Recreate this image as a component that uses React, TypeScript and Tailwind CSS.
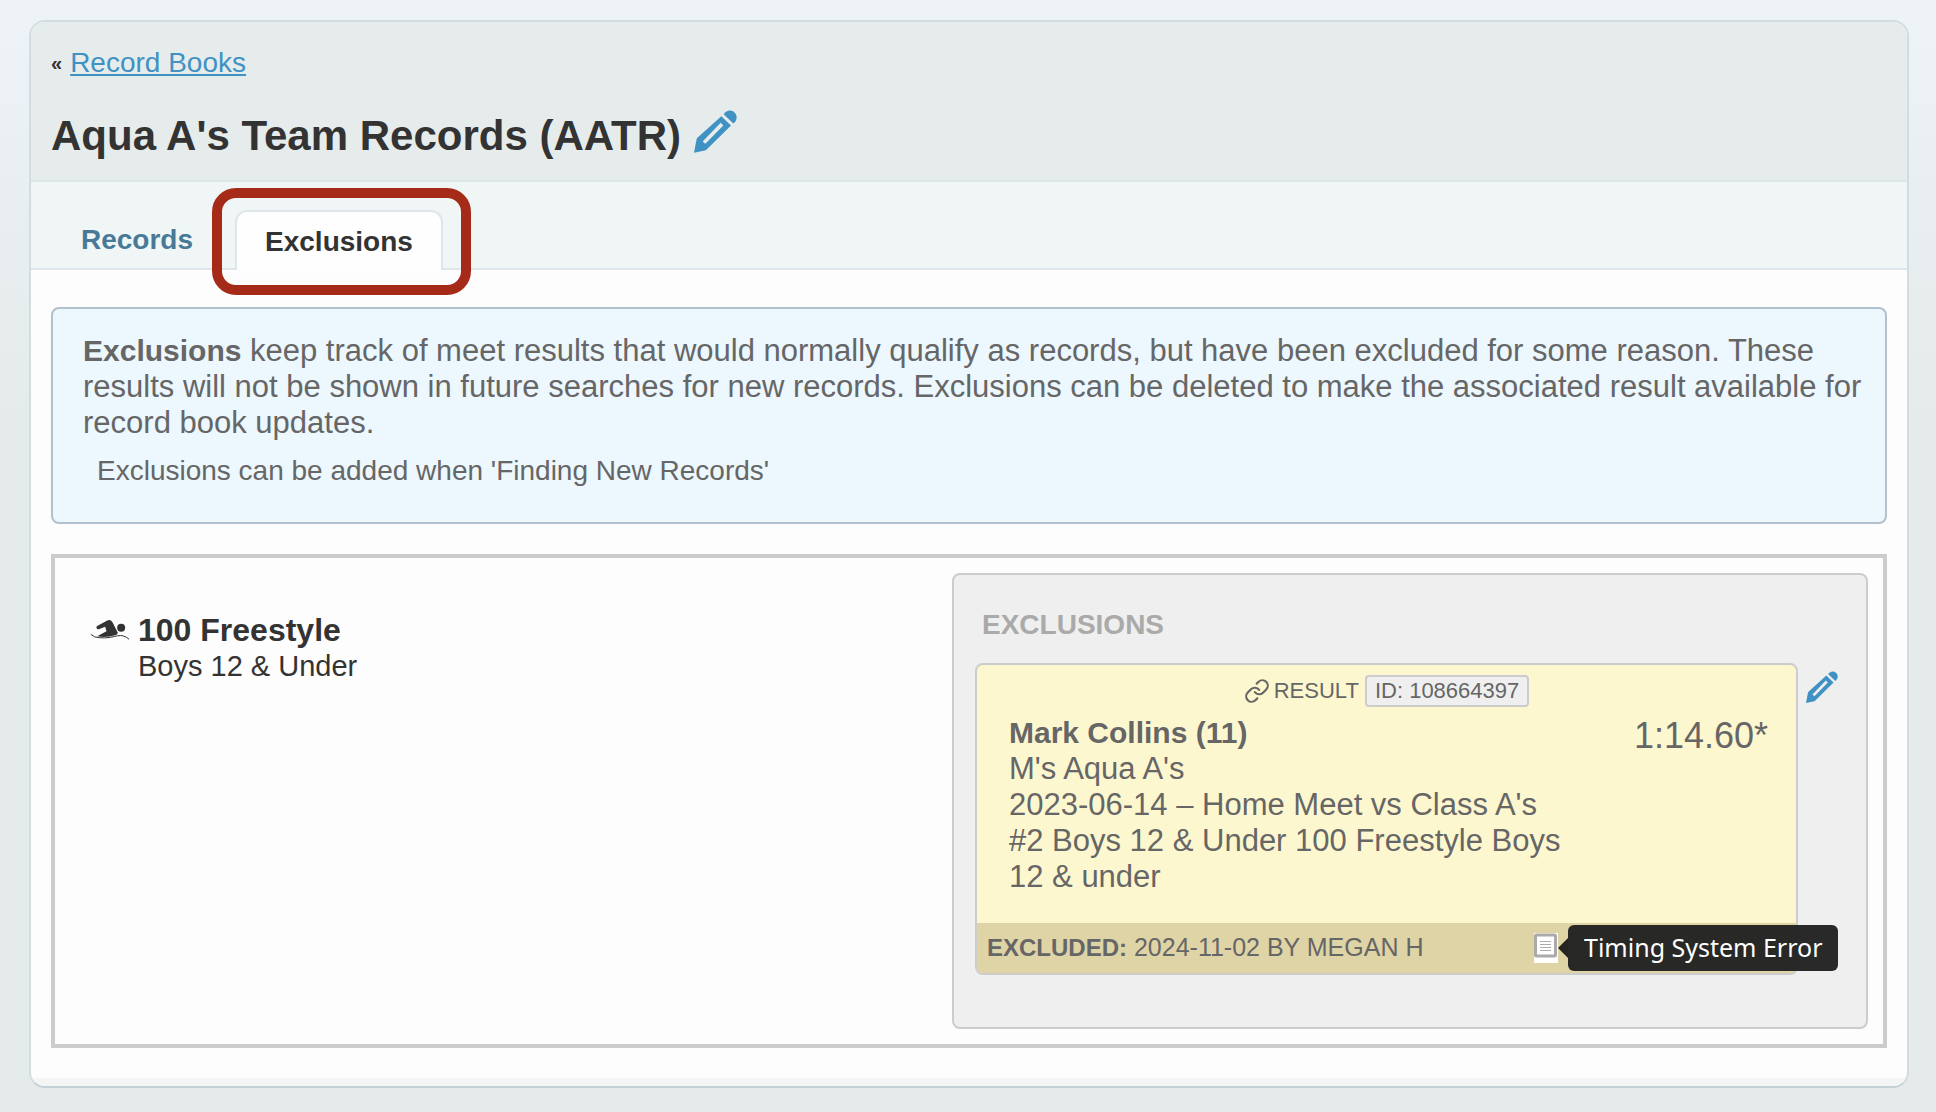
import { Link } from 'lucide-react';

interface Exclusion {
  resultId: string;
  swimmer: string;
  team: string;
  meet: string;
  event: string;
  time: string;
  excludedOn: string;
  note: string;
}

const exclusion: Exclusion = {
  resultId: '108664397',
  swimmer: 'Mark Collins (11)',
  team: "M's Aqua A's",
  meet: "2023-06-14 – Home Meet vs Class A's",
  event: '#2 Boys 12 & Under 100 Freestyle Boys 12 & under',
  time: '1:14.60*',
  excludedOn: '2024-11-02 BY MEGAN H',
  note: 'Timing System Error',
};

function PencilIcon({ className }: { className: string }) {
  return (
    <svg viewBox="0 0 129 128" fill="currentColor" className={className} aria-hidden="true">
      <path
        fillRule="evenodd"
        d="M0 128 8 86Q9 84 11 82L82 18 111 46 38 118Q36 120 33 121ZM26 94 34 101 88 46 80 38Z"
      />
      <path d="M89 12C98-1 114-2 122 8C131 17 130 31 118 40Z" />
    </svg>
  );
}

function SwimmerIcon() {
  return (
    <svg viewBox="0 0 117 60" className="h-5 w-10 shrink-0 text-[#333]" aria-hidden="true">
      <circle cx="92" cy="23" r="12" fill="currentColor" />
      <path
        fill="currentColor"
        d="M20 18 49 2Q60-3 66 7L82 38Q81 43 76 45Q48 54 20 49L48 34 44 20 27 27Q20 29 18 24Q17 20 20 18Z"
      />
      <path
        d="M1 43Q12 53 25 53Q42 55 60 52C76 49 88 44 99 48Q109 51 116 58"
        fill="none"
        stroke="currentColor"
        strokeWidth="3"
      />
    </svg>
  );
}

function NoteIcon() {
  return (
    <svg viewBox="0 0 24 30" className="h-[30px] w-6" aria-hidden="true">
      <path fill="#fff" d="M0 0H24V30H0Z" />
      <rect x="1.5" y="2" width="20" height="21" rx="1" fill="none" stroke="#aaa" strokeWidth="3" />
      <path stroke="#aaa" d="M6 8.5H17M6 11.5H17M6 14.5H17M6 17.5H17" />
    </svg>
  );
}

function ExclusionCard({ item }: { item: Exclusion }) {
  return (
    <article className="grow rounded-lg border-2 border-[#ccc] bg-[#fdf7cf] text-[#666]">
      <div className="flex h-[46px] items-center justify-center pt-1.5 text-[22px] leading-7">
        <Link className="size-[26px]" aria-hidden="true" />
        <span className="ml-1">RESULT</span>
        <span className="ml-1.5 rounded-sm border-2 border-[#ccc] bg-[#efefef] px-2">
          ID: {item.resultId}
        </span>
      </div>
      <div className="flex items-start justify-between pr-7 pb-7 pl-8 leading-9">
        <div className="mt-1 w-[560px] text-[31px]">
          <h3 className="text-[30px] leading-9 font-bold">{item.swimmer}</h3>
          <p className="leading-9">{item.team}</p>
          <p className="leading-9">{item.meet}</p>
          <p className="leading-9">{item.event}</p>
        </div>
        <p className="text-4xl leading-[50px]">{item.time}</p>
      </div>
      <footer className="flex h-[50px] items-center rounded-b-md bg-[#dfd4a6] pl-2.5">
        <p className="grow text-[25px]">
          <strong className="text-2xl">EXCLUDED:</strong> {item.excludedOn}
        </p>
        <div className="relative mr-[238px]">
          <button type="button" aria-label="Exclusion note" className="block">
            <NoteIcon />
          </button>
          <div
            role="tooltip"
            className="absolute top-1/2 left-full ml-2.5 flex h-[46px] -translate-y-1/2 items-center rounded-md bg-[#222]/97 px-4 font-['Noto_Sans',sans-serif] text-[25px] whitespace-nowrap text-white"
          >
            <svg viewBox="0 0 10 20" className="absolute right-full h-5 w-2.5" aria-hidden="true">
              <path fill="#252422" d="M10 0V20L0 10Z" />
            </svg>
            {item.note}
          </div>
        </div>
      </footer>
    </article>
  );
}

export default function App() {
  return (
    <div className="min-h-screen bg-[#e5ebea] bg-[linear-gradient(#edf3f6,#ebf1f4_100px,#e5ebea_420px)] pt-5 pr-[27px] pb-6 pl-[29px] font-['Liberation_Sans',Arial,sans-serif] text-[#333]">
      <main className="overflow-hidden rounded-2xl border-2 border-[#d2dce1] border-b-[#c3d0d6] bg-[#fdfdfd]">
        <header className="h-40 border-b-2 border-[#dfe6eb] bg-[#e6eceb] px-5 pt-[23px]">
          <nav className="flex h-9 items-center gap-2 text-[28px]">
            <span className="text-xl font-bold">«</span>
            <a href="#record-books" className="text-[#3f92c3] underline">
              Record Books
            </a>
          </nav>
          <div className="mt-[26px] flex h-14 items-center gap-[13px]">
            <h1 className="text-[42px] font-bold">Aqua A's Team Records (AATR)</h1>
            <button type="button" aria-label="Edit record book" className="mb-2 text-[#3f92c3]">
              <PencilIcon className="size-[43px]" />
            </button>
          </div>
        </header>

        <nav className="flex h-[88px] items-end border-b-2 border-[#dfe6eb] bg-[#f0f6f6] pl-[50px] text-[28px] font-bold">
          <a href="#records" className="mb-[7px] text-[#487a98]">
            Records
          </a>
          <div className="relative -mb-0.5 ml-[42px]">
            <a
              href="#exclusions"
              aria-current="page"
              className="flex h-[60px] items-center rounded-t-xl border-2 border-b-0 border-[#dfe6eb] bg-[#fefefe] px-7 pt-0.5"
            >
              Exclusions
            </a>
            <span className="pointer-events-none absolute -top-[22px] -right-7 -bottom-[25px] -left-[23px] rounded-3xl border-10 border-[#a52a17]" />
          </div>
        </nav>

        <div className="px-5 pt-[37px] pb-[30px]">
          <section className="rounded-lg border-2 border-[#b1c1ce] bg-[#ecf7fe] pt-6 pr-5 pb-[31px] pl-[30px] text-[#666]">
            <p className="text-[31px] leading-9">
              <strong className="text-[30px]">Exclusions</strong> keep track of meet results that would
              normally qualify as records, but have been excluded for some reason. These results will not be
              shown in future searches for new records. Exclusions can be deleted to make the associated
              result available for record book updates.
            </p>
            <p className="mt-2.5 pl-3.5 text-[28px] leading-10">
              Exclusions can be added when 'Finding New Records'
            </p>
          </section>

          <section className="mt-[30px] flex border-4 border-[#ccc] p-[15px]">
            <div className="flex w-1/2 items-start pt-[39px] pl-5">
              <div className="pt-2">
                <SwimmerIcon />
              </div>
              <div className="pl-2 leading-9">
                <h2 className="text-[32px] leading-9 font-bold">100 Freestyle</h2>
                <p className="text-[29px] leading-9">Boys 12 & Under</p>
              </div>
            </div>
            <div className="w-[916px] shrink-0 grow rounded-lg border-2 border-[#ccc] bg-[#efefef] px-[21px] pt-[30px] pb-[52px]">
              <h2 className="pl-[7px] text-[28px] leading-10 font-bold text-[#aaa]">EXCLUSIONS</h2>
              <div className="mt-[18px] flex items-start">
                <ExclusionCard item={exclusion} />
                <button type="button" aria-label="Edit exclusion" className="mt-2 mr-[7px] ml-2 text-[#3f92c3]">
                  <PencilIcon className="size-8" />
                </button>
              </div>
            </div>
          </section>
        </div>
        <div className="h-2 bg-[#f4f5f5]" />
      </main>
    </div>
  );
}
